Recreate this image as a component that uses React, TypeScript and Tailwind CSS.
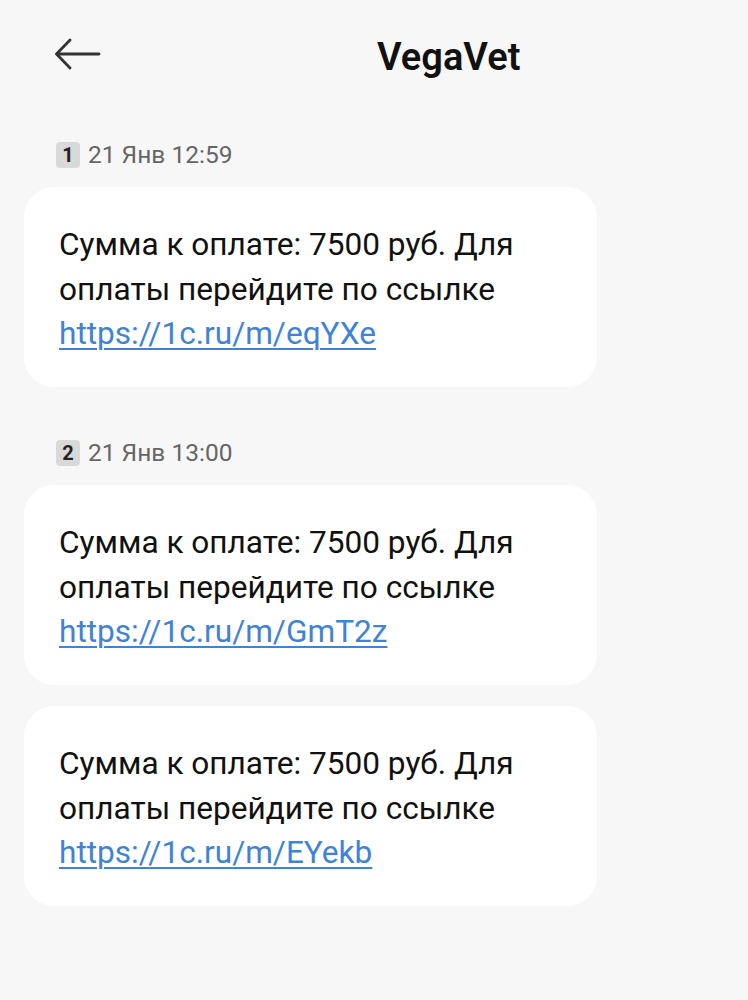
import React from "react";

const msgs = [
  { badge: "1", date: "21 Янв 12:59", link: "https://1c.ru/m/eqYXe" },
  { badge: "2", date: "21 Янв 13:00", link: "https://1c.ru/m/GmT2z" },
  { badge: null, date: null, link: "https://1c.ru/m/EYekb" },
];

function Bubble({ link }: { link: string }) {
  return (
    <div className="w-[573px] h-[200px] bg-white rounded-[30px] pl-[35px] pr-[20px] pt-[6px] flex flex-col justify-center">
      <p className="text-[31.6px] leading-[44.5px] text-[#111]">
        Сумма к оплате: 7500 руб. Для
        <br />
        оплаты перейдите по ссылке
        <br />
        <a className="text-[#3f83d6] underline underline-offset-[4px] decoration-[2px]">{link}</a>
      </p>
    </div>
  );
}

export default function App() {
  return (
    <div
      className="w-[748px] h-[1000px] bg-[#f7f7f7] overflow-hidden"
      style={{ fontFamily: "Roboto, 'Noto Sans', sans-serif" }}
    >
      <div className="h-[110px] flex items-center pl-[55px]">
        <svg width="46" height="32" viewBox="0 0 46 32" fill="none" stroke="#333" strokeWidth="2.8" strokeLinecap="round" strokeLinejoin="round" className="-mt-[3px]">
          <path d="M44 16H2" />
          <path d="M15 2L1.5 16L15 30" />
        </svg>
        <span className="ml-[276px] mt-[4px] text-[38px] font-semibold text-[#111] leading-none">VegaVet</span>
      </div>
      <div className="pl-[24px] pt-[32px] flex flex-col">
        {msgs.map((m, i) => (
          <div key={i} className={m.date ? (i === 0 ? "" : "mt-[53px]") : "mt-[21px]"}>
            {m.date && (
              <div className="flex items-center gap-[8px] pl-[32px] mb-[19px] h-[26px]">
                <span className="w-[24px] h-[26px] rounded-[4px] bg-[#d9d9d9] text-[#222] text-[20px] font-bold flex items-center justify-center">
                  {m.badge}
                </span>
                <span className="text-[24.5px] text-[#666] leading-none">{m.date}</span>
              </div>
            )}
            <Bubble link={m.link} />
          </div>
        ))}
      </div>
    </div>
  );
}
